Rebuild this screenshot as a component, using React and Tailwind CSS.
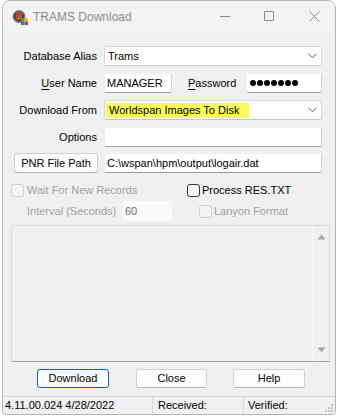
import React from "react";

const LABEL = "w-[94px] shrink-0 text-right pr-0";

function Chevron() {
  return (
    <svg width="9" height="6" viewBox="0 0 9 6" className="shrink-0">
      <path d="M0.5 0.8 L4.5 4.8 L8.5 0.8" fill="none" stroke="#606060" strokeWidth="1" />
    </svg>
  );
}

function Combo({ children }) {
  return (
    <div className="w-[218px] h-[20px] bg-white border border-[#d9d9d9] border-b-[#c4c4c4] rounded-[2px] flex items-center pl-[1px] pr-[4px]">
      <div className="flex-1 flex items-center">{children}</div>
      <Chevron />
    </div>
  );
}

function Edit({ className = "", children }) {
  return (
    <div
      className={`h-[20px] shrink-0 bg-white border border-[#eeeeee] border-r-[#d4d4d4] border-b-[#9d9d9d] rounded-[2px] flex items-center pl-[1px] ${className}`}
    >
      {children}
    </div>
  );
}

function Check({ disabled }) {
  return (
    <span
      className={`w-[13px] h-[13px] rounded-[3px] border shrink-0 ${
        disabled ? "border-[#cfcfcf] bg-[#f5f5f5]" : "border-[#333333] bg-[#f7f7f7]"
      }`}
    />
  );
}

function Button({ children, primary, className = "" }) {
  return (
    <div
      className={`h-[19px] shrink-0 flex items-center justify-center rounded-[3px] border bg-[#fdfdfd] ${
        primary ? "border-[#0067c0]" : "border-[#d0d0d0] border-b-[#b5b5b5]"
      } ${className}`}
    >
      {children}
    </div>
  );
}

function AppIcon() {
  return (
    <svg width="16" height="16" viewBox="0 0 16 16" className="shrink-0">
      <circle cx="7" cy="7.5" r="6.5" fill="#7d7d7d" />
      <circle cx="7" cy="7.5" r="5" fill="#3a3a3a" />
      <path d="M4.5 11 V5.5 Q4.5 3.5 7 3.5 Q9.5 3.5 9.5 5.5 V11" fill="none" stroke="#e0442a" strokeWidth="1.6" />
      <path d="M6.3 11 V6.5 Q6.3 5.3 7 5.3 Q7.8 5.3 7.8 6.5 V11" fill="none" stroke="#f07a30" strokeWidth="1" />
      <rect x="9" y="9" width="3.5" height="3.5" fill="#3fa33f" />
      <rect x="12.5" y="9" width="3.5" height="3.5" fill="#f2c21b" />
      <rect x="9" y="12.5" width="3.5" height="3.5" fill="#2f6fd0" />
      <rect x="12.5" y="12.5" width="3.5" height="3.5" fill="#d63a3a" />
    </svg>
  );
}

export default function App() {
  return (
    <div className="w-[339px] h-[416px] bg-white pl-[2px] font-['Liberation_Sans',Arial,sans-serif] text-[11px] text-black leading-none">
      <div className="w-[334px] h-[415px] border border-[#b4b4b4] rounded-t-[8px] rounded-b-[4px] bg-[#f0f0f0] flex flex-col overflow-hidden">
        {/* title bar */}
        <div className="h-[31px] shrink-0 bg-[#f3f3f3] flex items-center pl-[9px] pr-[15px]">
          <AppIcon />
          <span className="ml-[5px] text-[12px] text-[#8c8c8c]">TRAMS Download</span>
          <div className="ml-auto flex items-center gap-[34px] pb-[1px]">
            <span className="w-[10px] h-px bg-[#8a8a8a]" />
            <span className="w-[10px] h-[10px] border border-[#8a8a8a] rounded-[1px]" />
            <svg width="11" height="11" viewBox="0 0 11 11" className="ml-[1px]">
              <path d="M0.5 0.5 L10.5 10.5 M10.5 0.5 L0.5 10.5" stroke="#8a8a8a" strokeWidth="1" />
            </svg>
          </div>
        </div>

        {/* form rows */}
        <div className="flex items-center mt-[14px] h-[20px]">
          <span className={LABEL}>Database Alias</span>
          <div className="ml-[7px]">
            <Combo>
              <span className="pl-[2px]">Trams</span>
            </Combo>
          </div>
        </div>

        <div className="flex items-center mt-[7px] h-[20px]">
          <span className={LABEL}>
            <span className="underline underline-offset-[2px]">U</span>ser Name
          </span>
          <Edit className="ml-[7px] w-[68px]">
            <span className="pl-[1px]">MANAGER</span>
          </Edit>
          <span className="ml-[16px] w-[58px] shrink-0">
            <span className="underline underline-offset-[2px]">P</span>assword
          </span>
          <Edit className="w-[76px]">
            <div className="flex items-center gap-[1px] pl-[2px]">
              {[0, 1, 2, 3, 4, 5, 6].map((i) => (
                <span key={i} className="w-[6px] h-[6px] rounded-full bg-black" />
              ))}
            </div>
          </Edit>
        </div>

        <div className="flex items-center mt-[7px] h-[20px]">
          <span className={LABEL}>Download From</span>
          <div className="ml-[7px]">
            <Combo>
              <span className="bg-[#fafa5c] h-[15px] w-[143px] flex items-center pl-[3px]">
                Worldspan Images To Disk
              </span>
            </Combo>
          </div>
        </div>

        <div className="flex items-center mt-[7px] h-[20px]">
          <span className={LABEL}>Options</span>
          <Edit className="ml-[7px] w-[218px]" />
        </div>

        <div className="flex items-center mt-[6px] h-[20px]">
          <Button className="ml-[11px] w-[84px] h-[20px]">PNR File Path</Button>
          <Edit className="ml-[6px] w-[218px]">
            <span className="pl-[1px]">C:\wspan\hpm\output\logair.dat</span>
          </Edit>
        </div>

        {/* checkboxes */}
        <div className="flex items-center mt-[11px] h-[13px]">
          <div className="ml-[8px] flex items-center gap-[3px] w-[176px] text-[#a0a0a0]">
            <Check disabled />
            <span>Wait For New Records</span>
          </div>
          <div className="flex items-center gap-[2px]">
            <Check />
            <span>Process RES.TXT</span>
          </div>
        </div>

        <div className="flex items-center mt-[4px] h-[20px]">
          <span className="ml-[24px] w-[96px] text-[#a0a0a0]">Interval (Seconds)</span>
          <div className="w-[49px] h-[20px] bg-[#fafafa] flex items-center pl-[2px] text-[#6d6d6d]">60</div>
          <div className="ml-[27px] flex items-center gap-[2px] text-[#a0a0a0]">
            <Check disabled />
            <span>Lanyon Format</span>
          </div>
        </div>

        {/* log list */}
        <div className="ml-[8px] mt-[4px] w-[319px] h-[137px] border border-[#dcdcdc] border-b-[#a0a0a0] bg-[#f0f0f0] flex">
          <div className="flex-1" />
          <div className="w-[17px] border-l border-[#fafafa] flex flex-col items-center justify-between py-[8px]">
            <svg width="9" height="6" viewBox="0 0 9 6">
              <path d="M4.5 0.5 L8.5 5.5 L0.5 5.5 Z" fill="#a3a3a3" />
            </svg>
            <svg width="9" height="6" viewBox="0 0 9 6">
              <path d="M0.5 0.5 L8.5 0.5 L4.5 5.5 Z" fill="#a3a3a3" />
            </svg>
          </div>
        </div>

        {/* buttons */}
        <div className="flex items-center mt-[7px] h-[19px]">
          <Button primary className="ml-[34px] w-[72px]">Download</Button>
          <Button className="ml-[27px] w-[71px]">Close</Button>
          <Button className="ml-[26px] w-[72px]">Help</Button>
        </div>

        {/* status bar */}
        <div className="mt-[8px] flex-1 border-t border-[#dadada] flex items-center relative">
          <span className="pl-[2px] w-[149px]">4.11.00.024 4/28/2022</span>
          <span className="w-px h-full bg-[#dadada]" />
          <span className="pl-[5px] w-[90px]">Received:</span>
          <span className="w-px h-full bg-[#dadada]" />
          <span className="pl-[4px]">Verified:</span>
          <svg width="8" height="8" viewBox="0 0 8 8" className="absolute right-[2px] bottom-[2px]">
            <rect x="6" y="0" width="2" height="2" fill="#c4c4c4" />
            <rect x="3" y="3" width="2" height="2" fill="#c4c4c4" />
            <rect x="6" y="3" width="2" height="2" fill="#c4c4c4" />
            <rect x="0" y="6" width="2" height="2" fill="#c4c4c4" />
            <rect x="3" y="6" width="2" height="2" fill="#c4c4c4" />
            <rect x="6" y="6" width="2" height="2" fill="#c4c4c4" />
          </svg>
        </div>
      </div>
    </div>
  );
}
